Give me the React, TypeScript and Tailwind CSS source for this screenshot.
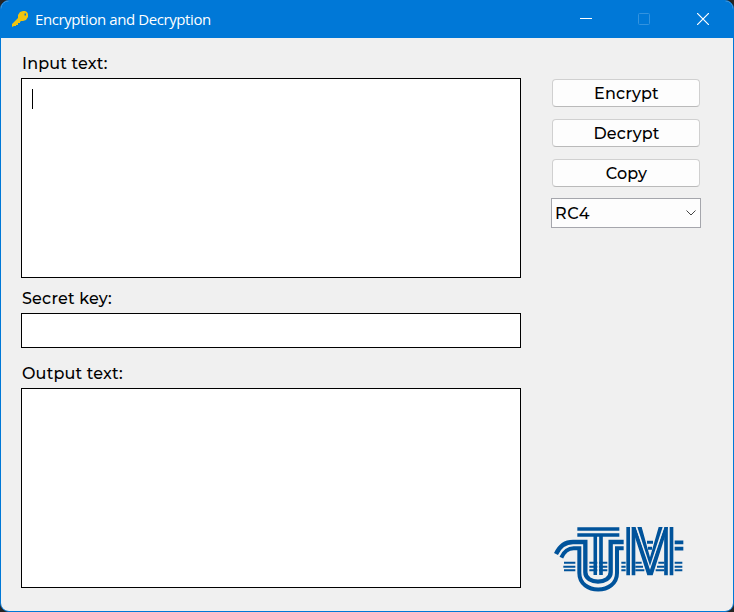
import type { ReactNode } from "react";

function KeyIcon() {
  return (
    <svg className="h-4 w-4" viewBox="0 0 16 16">
      <path fill="#f1c40f" fillRule="evenodd" d="M11 0h2l2 1 1 2v3l-2 3-3 1H9l-1 1v1H6v2H4v1H2L0 16v-3l6-6V4l2-3 3-1zm1.5 2.5v2h1.5v-2z" />
    </svg>
  );
}

function Logo() {
  return (
    <svg className="h-[85px] w-[150px]" viewBox="0 0 450 255" fill="none" stroke="#00539b">
      <path strokeWidth="11" d="M97 42H223M97 60H223M151 60V180M168 60V180" />
      <path strokeWidth="13" d="M33 117C43 95 60 81 84 81H121V172C121 209 197 209 197 172V81H236" />
      <path strokeWidth="12" d="M49 128C57 110 69 100 86 100H103V174C103 240 216 240 216 174V100H236" />
      <path strokeWidth="6" d="M57 143H91M55 155H91M57 166H91M133 143H187M133 155H187M133 166H187M229 143H412M229 155H412M229 166H412" />
      <path stroke="#f0f0f0" strokeWidth="5" d="M159.500 66V181" />
      <path fill="#f0f0f0" stroke="none" d="M242 36H389V181H242z" />
      <path strokeWidth="11" d="M389 82H415M389 101H415" />
      <path strokeWidth="6" d="M271 143H290M271 155H294M271 166H298M340 143H358M336 155H358M332 166H358" />
      <path strokeWidth="11" d="M249.500 36V181M265.500 36V181M363 36V181M379.500 36V181" />
      <path fill="#00539b" stroke="none" d="M260 36H272L315 158L358 36H369L323 181H307z" />
      <path fill="#f0f0f0" stroke="none" d="M272 36H358L315 164z" />
      <path fill="#00539b" stroke="none" d="M277 36H290L315 127L341 36H353L315 153z" />
      <path strokeWidth="9" d="M306 82H324M309 100H321" />
    </svg>
  );
}

function Label({ children }: { children: ReactNode }) {
  return <label className="block h-[25px] pl-px text-[16px] font-medium leading-[21px] tracking-[0.18px]">{children}</label>;
}

function ActionButton({ children }: { children: ReactNode }) {
  return (
    <button className="h-7 w-[148px] rounded border border-[#d0d0d0] border-b-[#bababa] bg-[#fdfdfd] pl-px pt-px text-[16px] font-medium leading-[26px] tracking-[0.15px]">
      {children}
    </button>
  );
}

export default function App() {
  return (
    <div className="h-[612px] w-[734px] bg-[#252525]">
      <div className="flex h-full flex-col overflow-hidden rounded-[9px] border border-[#0078d7] bg-[#f0f0f0] font-['Montserrat','Inter',sans-serif] text-black">
        <header className="flex h-[37px] shrink-0 items-center bg-[#0078d7] pb-px pl-[11px] text-white">
          <KeyIcon />
          <h1 className="ml-[7px] font-['Segoe_UI','Open_Sans',sans-serif] text-[15px] leading-5 tracking-[-0.41px]">Encryption and Decryption</h1>
          <div className="ml-auto mr-6 flex">
            <svg className="mr-[46px] h-3 w-3" viewBox="0 0 12 12"><path stroke="white" d="M0 5.500H12" /></svg>
            <svg className="mr-[47px] h-3 w-3" viewBox="0 0 12 12" fill="none"><rect x=".5" y=".5" width="11" height="11" rx="1" stroke="#3393df" /></svg>
            <svg className="h-3 w-3" viewBox="0 0 12 12"><path stroke="white" strokeWidth="1.200" d="M0 0L12 12M12 0L0 12" /></svg>
          </div>
        </header>
        <main className="flex grow pl-5 pt-[15px]">
          <section className="w-[500px]">
            <Label>Input text:</Label>
            <div className="h-[200px] border border-black bg-white pl-[10px] pt-[10px]">
              <div className="h-5 w-px bg-black" />
            </div>
            <div className="pt-[10px]"><Label>Secret key:</Label></div>
            <div className="h-[35px] border border-black bg-white" />
            <div className="pt-[15px]"><Label>Output text:</Label></div>
            <div className="h-[200px] border border-black bg-white" />
          </section>
          <aside className="ml-[24px] flex w-[156px] flex-col pt-[26px]">
            <div className="ml-[7px] flex flex-col gap-3">
              <ActionButton>Encrypt</ActionButton>
              <ActionButton>Decrypt</ActionButton>
              <ActionButton>Copy</ActionButton>
            </div>
            <div className="ml-[6px] mt-[11px] flex h-[30px] w-[150px] items-center justify-between border border-[#a5a6ac] bg-[#fdfdfd] pl-[3px] pr-[4px] text-[16px] font-medium">
              <span className="pt-0.5 tracking-[0.5px]">RC4</span>
              <svg className="h-[6px] w-[10px]" viewBox="0 0 10 6" fill="none" stroke="#444"><path d="M.5 .5L5 5L9.500 .5" /></svg>
            </div>
            <div className="mt-[287px]"><Logo /></div>
          </aside>
        </main>
      </div>
    </div>
  );
}
